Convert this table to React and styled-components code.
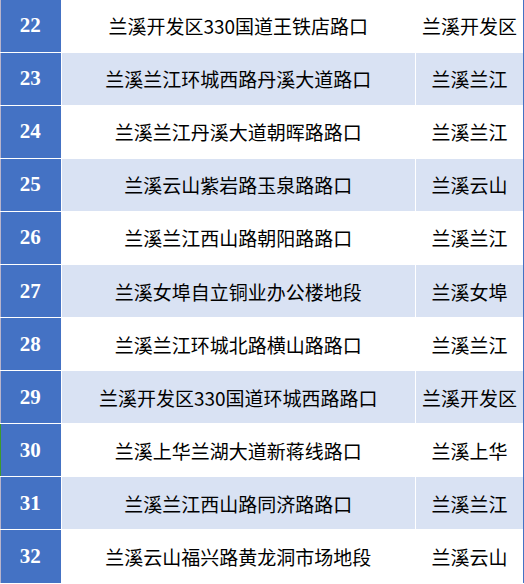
import React from "react";
import styled, { createGlobalStyle } from "styled-components";

const Global = createGlobalStyle`
  html, body { margin: 0; padding: 0; background: #ffffff; overflow: hidden; }
  body { width: 524px; height: 584px; }
`;

const Table = styled.div`
  display: grid;
  grid-template-columns: 60.5px 353.5px 107px;
  grid-auto-rows: 52.1px;
  column-gap: 1px;
  row-gap: 1px;
  margin-top: -0.5px;
  width: 523px;
  border-right: 1px solid #4472c4;
  background: #ffffff;
`;

const NumCell = styled.div`
  display: flex;
  align-items: center;
  justify-content: center;
  background: #4472c4;
  color: #ffffff;
  font-family: "Liberation Serif", "DejaVu Serif", serif;
  font-weight: 600;
  font-size: 21px;
  box-shadow: inset 1px 0 0 ${(p) => (p.$marked ? "#3c9a2c" : "#b8b4cc")};
`;

const TextCell = styled.div`
  display: flex;
  align-items: center;
  justify-content: center;
  background: ${(p) => (p.$alt ? "#d9e2f3" : "#ffffff")};
  color: #000000;
  font-family: "Noto Sans CJK SC", "Noto Sans", sans-serif;
  font-size: 19px;
  white-space: nowrap;
`;

const rows = [
  [22, "兰溪开发区330国道王铁店路口", "兰溪开发区"],
  [23, "兰溪兰江环城西路丹溪大道路口", "兰溪兰江"],
  [24, "兰溪兰江丹溪大道朝晖路路口", "兰溪兰江"],
  [25, "兰溪云山紫岩路玉泉路路口", "兰溪云山"],
  [26, "兰溪兰江西山路朝阳路路口", "兰溪兰江"],
  [27, "兰溪女埠自立铜业办公楼地段", "兰溪女埠"],
  [28, "兰溪兰江环城北路横山路路口", "兰溪兰江"],
  [29, "兰溪开发区330国道环城西路路口", "兰溪开发区"],
  [30, "兰溪上华兰湖大道新蒋线路口", "兰溪上华"],
  [31, "兰溪兰江西山路同济路路口", "兰溪兰江"],
  [32, "兰溪云山福兴路黄龙洞市场地段", "兰溪云山"],
];

export default function App() {
  return (
    <>
      <Global />
      <Table>
        {rows.map(([n, place, area]) => {
          const alt = n % 2 === 1;
          return (
            <React.Fragment key={n}>
              <NumCell $marked={n === 30}>{n}</NumCell>
              <TextCell $alt={alt}>{place}</TextCell>
              <TextCell $alt={alt}>{area}</TextCell>
            </React.Fragment>
          );
        })}
      </Table>
    </>
  );
}
